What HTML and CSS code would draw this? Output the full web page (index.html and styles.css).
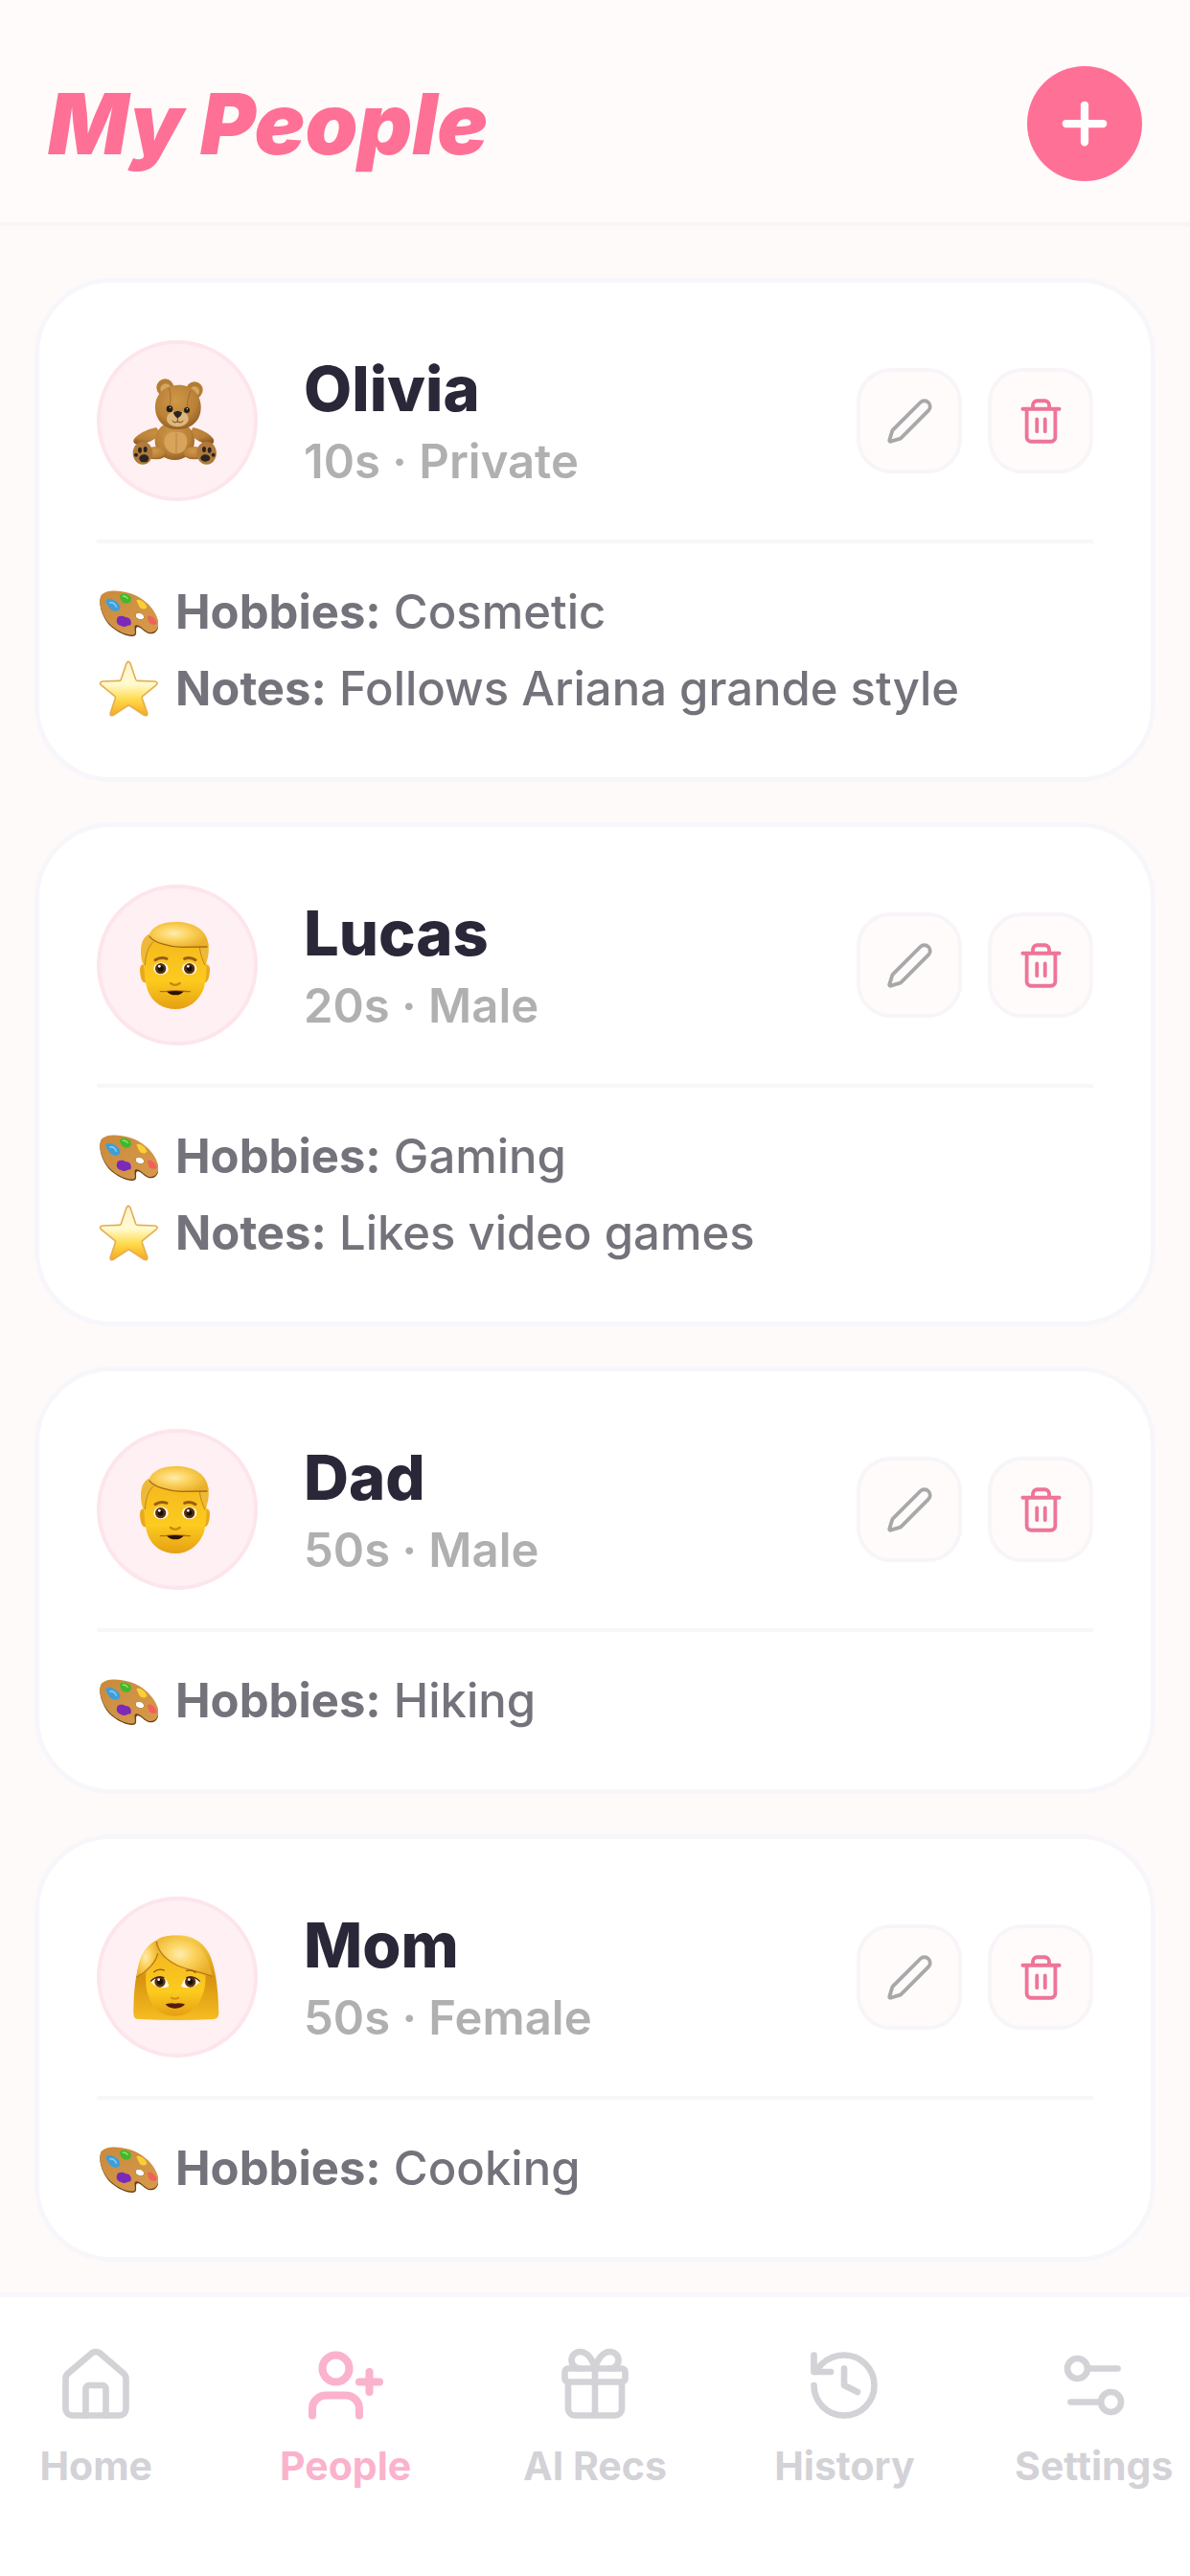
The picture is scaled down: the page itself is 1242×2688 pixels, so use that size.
FILE: index.html
```html
<!DOCTYPE html>
<html lang="en">
<head>
<meta charset="utf-8">
<meta name="viewport" content="width=device-width, initial-scale=1">
<title>My People</title>
<link rel="stylesheet" href="styles.css">
</head>
<body>
<svg class="sprite" aria-hidden="true">
  <defs>
    <radialGradient id="fur" cx=".45" cy=".35" r=".7"><stop offset="0" stop-color="#cf9847"/><stop offset=".65" stop-color="#b98037"/><stop offset="1" stop-color="#8d5a22"/></radialGradient>
    <linearGradient id="skin" x1="0" y1="0" x2="0" y2="1"><stop offset="0" stop-color="#f5b81e"/><stop offset=".6" stop-color="#fccb1f"/><stop offset="1" stop-color="#e5a012"/></linearGradient>
    <radialGradient id="hair" cx=".42" cy=".45" r=".6"><stop offset="0" stop-color="#ffecae"/><stop offset=".45" stop-color="#fbd25c"/><stop offset="1" stop-color="#eab02a"/></radialGradient>
    <linearGradient id="locks" x1="0" y1="0" x2="0" y2="1"><stop offset="0" stop-color="#fad04a"/><stop offset=".5" stop-color="#d6930f"/><stop offset="1" stop-color="#f6bd22"/></linearGradient>
    <linearGradient id="gold" x1="0" y1="0" x2="0" y2="1"><stop offset="0" stop-color="#fff3cf"/><stop offset=".42" stop-color="#fffbd0"/><stop offset=".7" stop-color="#ffdb4c"/><stop offset="1" stop-color="#f5a81f"/></linearGradient>
    <linearGradient id="wood" x1="0" y1="0" x2="1" y2="1"><stop offset="0" stop-color="#c98a3c"/><stop offset="1" stop-color="#d79a4c"/></linearGradient>
  </defs>
  <symbol id="bear" viewBox="77 55 480 480">
    <path d="M252 316C220 322 192 338 182 352C174 366 190 372 206 368C232 362 254 350 264 336ZM366 316C400 324 420 338 430 352C436 366 424 374 408 368C388 362 368 350 356 336Z" fill="url(#fur)"/>
    <ellipse cx="309" cy="358" rx="62" ry="60" fill="url(#fur)"/>
    <path d="M313 332C286 326 276 344 276 362C278 386 294 398 313 398C334 398 346 386 348 362C348 344 340 326 313 332Z" fill="#d8a45c"/>
    <path d="M314 334V396" stroke="#a87433" stroke-width="2"/>
    <ellipse cx="250" cy="396" rx="34" ry="20" fill="url(#fur)"/><ellipse cx="370" cy="396" rx="34" ry="20" fill="url(#fur)"/>
    <ellipse cx="209" cy="396" rx="31" ry="36" fill="#b07a3c"/><ellipse cx="409" cy="396" rx="31" ry="36" fill="#b07a3c"/>
    <g fill="#2a2521"><ellipse cx="213" cy="413" rx="15" ry="12"/><ellipse cx="200" cy="387" rx="6" ry="9"/><ellipse cx="217" cy="385" rx="6" ry="9"/><circle cx="188" cy="402" r="6"/><ellipse cx="405" cy="412" rx="15" ry="11"/><ellipse cx="401" cy="385" rx="6" ry="9"/><ellipse cx="418" cy="387" rx="6" ry="9"/><circle cx="430" cy="402" r="6"/></g>
    <circle cx="279" cy="191" r="27" fill="#b47c35"/><circle cx="371" cy="199" r="26" fill="#b47c35"/>
    <circle cx="281" cy="196" r="17" fill="#d5a662"/><circle cx="371" cy="203" r="15" fill="#d5a662"/>
    <path d="M320 183C362 182 391 211 391 254C391 294 362 322 320 322C276 322 248 294 248 252C248 211 278 184 320 183Z" fill="url(#fur)"/>
    <path d="M291 193Q300 218 292 252M360 200Q349 220 348 254" fill="none" stroke="#8b6029" stroke-width="2"/>
    <ellipse cx="318" cy="289" rx="34" ry="25" fill="#e0b77b"/>
    <path d="M305 269Q318 260 332 269Q330 282 318 287Q307 281 305 269Z" fill="#292522"/>
    <path d="M318 286V298M301 295Q308 305 318 298Q329 305 336 295" fill="none" stroke="#6f4720" stroke-width="3"/>
    <circle cx="293" cy="258" r="10" fill="#211d1b"/><circle cx="347" cy="262" r="9" fill="#211d1b"/>
    <circle cx="295" cy="254" r="2" fill="#fff"/><circle cx="348" cy="258" r="2" fill="#fff"/>
  </symbol>
  <symbol id="man" viewBox="77 79 480 480">
    <path d="M213 318C200 314 198 332 202 352C204 372 216 378 224 372ZM405 318C420 314 421 332 417 352C414 372 404 378 396 372Z" fill="#eaa91a"/>
    <path d="M220 236H406C411 318 410 372 396 402C380 434 350 457 312 457C272 457 240 436 226 402C212 364 210 318 220 236Z" fill="url(#skin)"/>
    <path d="M228 222C202 236 202 268 204 292C206 312 212 320 216 320C218 286 226 262 246 242ZM384 256C388 284 396 304 404 320C414 300 418 274 414 250Z" fill="#edb938"/>
    <path d="M216 320C218 286 226 262 242 246M387 262C389 284 396 304 404 320" stroke="#c5840f" stroke-width="3" fill="none"/>
    <path d="M228 226C238 196 274 184 312 184C366 184 412 206 415 260C370 264 326 266 288 258C258 252 236 240 228 226Z" fill="url(#hair)"/>
    <path d="M230 229C242 248 290 262 330 263L410 262" fill="none" stroke="#a66a10" stroke-width="4" stroke-linecap="round"/>
    <path d="M248 303Q264 292 284 299M340 299Q358 292 374 303" fill="none" stroke="#995d12" stroke-width="9" stroke-linecap="round"/>
    <ellipse cx="266" cy="330" rx="23" ry="19" fill="#fffbe8"/><ellipse cx="355" cy="330" rx="23" ry="19" fill="#fffbe8"/>
    <circle cx="265" cy="330" r="17" fill="#5a3010"/><circle cx="355" cy="330" r="17" fill="#5a3010"/>
    <circle cx="265" cy="330" r="9" fill="#17100b"/><circle cx="355" cy="330" r="9" fill="#17100b"/>
    <circle cx="261" cy="323" r="4" fill="#fff"/><circle cx="351" cy="323" r="4" fill="#fff"/>
    <path d="M296 376Q310 387 325 376" fill="none" stroke="#c98512" stroke-width="7" stroke-linecap="round"/>
    <path d="M264 402C286 403 300 398 310 400C322 398 338 403 357 402" fill="none" stroke="#ad6f10" stroke-width="4" stroke-linecap="round"/>
    <path d="M284 402Q310 398 337 402Q326 414 310 413Q295 413 284 402Z" fill="#2b1106"/>
  </symbol>
  <symbol id="woman" viewBox="77 66 480 480">
    <path d="M256 188C330 158 400 180 424 250C440 296 446 360 447 420Q446 436 432 438Q310 444 190 437Q180 434 180 420C182 340 184 230 256 188Z" fill="url(#locks)"/>
    <path d="M255 236C300 258 350 274 404 292C410 330 398 370 378 396C360 418 336 428 310 428C278 428 252 414 238 390C218 356 214 310 222 278Q240 262 255 236Z" fill="url(#skin)"/>
    <path d="M250 192C214 210 194 248 190 306C222 294 256 262 258 222Z" fill="url(#hair)"/>
    <path d="M254 190C276 172 330 170 368 196C404 222 418 254 426 304C376 294 320 280 284 250C262 232 250 212 254 190Z" fill="url(#hair)"/>
    <path d="M252 194C254 222 280 252 318 270C350 284 392 290 426 304M256 232C250 260 222 290 190 306" fill="none" stroke="#b87910" stroke-width="4"/>
    <path d="M244 290Q258 278 276 285M346 286Q362 281 374 292" fill="none" stroke="#8b5410" stroke-width="4" stroke-linecap="round"/>
    <path d="M234 322Q250 300 276 308Q290 320 290 336Q258 348 234 322ZM388 322Q370 300 345 308Q332 320 330 336Q362 348 388 322Z" fill="#fffbe4"/>
    <circle cx="263" cy="321" r="17" fill="#5b3210"/><circle cx="358" cy="321" r="17" fill="#5b3210"/>
    <circle cx="263" cy="321" r="9" fill="#17100b"/><circle cx="358" cy="321" r="9" fill="#17100b"/>
    <circle cx="259" cy="314" r="4" fill="#fff"/><circle cx="354" cy="314" r="4" fill="#fff"/>
    <path d="M234 320Q250 300 276 308M388 320Q370 300 345 308" fill="none" stroke="#3f220a" stroke-width="4"/>
    <path d="M299 371Q310 378 321 371" fill="none" stroke="#cf8d14" stroke-width="6" stroke-linecap="round"/>
    <path d="M280 391Q300 386 310 389Q322 386 341 391Q330 405 310 404Q291 405 280 391Z" fill="#571c0c"/>
  </symbol>
  <symbol id="palette" viewBox="36 18 192 192">
    <path d="M50 62C66 44 104 46 140 56C186 70 226 112 229 152C230 172 216 184 198 180C184 176 174 160 164 160C154 162 164 178 156 187C142 194 108 182 82 160C54 134 38 88 50 62ZM170 116C158 114 154 126 162 132C170 138 182 138 184 130C184 122 178 117 170 116Z" fill="#6a3f16" fill-rule="evenodd"/>
    <path d="M50 60C66 42 104 44 140 54C186 68 226 110 229 148C230 168 216 180 198 176C184 172 174 154 160 154C148 156 160 174 154 182C142 190 108 178 82 156C54 130 38 86 50 60ZM170 116C158 114 154 126 162 132C170 138 182 138 184 130C184 122 178 117 170 116Z" fill="url(#wood)" fill-rule="evenodd"/>
    <path d="M66 74C74 68 88 72 98 82C110 90 112 102 104 108C92 114 76 106 72 94C68 86 62 82 66 74Z" fill="#3d9edb"/><path d="M76 84Q90 80 98 98" stroke="#8bd0f5" stroke-width="4" fill="none"/>
    <path d="M108 62C114 52 130 54 140 64C148 74 142 86 130 86C118 86 108 76 108 62Z" fill="#41b82b"/><path d="M116 64Q126 60 134 72" stroke="#91e56e" stroke-width="4" fill="none"/>
    <path d="M160 76C172 70 190 84 193 98C186 108 172 104 168 94Z" fill="#fbcf35"/>
    <path d="M100 132C104 122 120 124 128 130C142 130 146 144 142 154C132 154 124 164 112 156C98 152 96 142 100 132Z" fill="#7a29b8"/>
    <path d="M194 128C202 118 220 132 224 148C220 156 206 152 200 146Z" fill="#f2605c"/>
  </symbol>
  <symbol id="star" viewBox="36 258 192 192">
    <path d="M129 274Q135 262 141 274L158 324Q160 328 164 328L218 330Q230 333 222 342L180 376Q177 379 178 383L194 428Q196 440 184 436L140 407Q136 404 132 407L88 436Q76 440 79 428L94 383Q95 379 92 376L50 342Q42 333 54 330L106 328Q111 328 112 324Z" fill="url(#gold)" stroke="#e6ae50" stroke-width="5"/>
  </symbol>
  <symbol id="pencil" viewBox="0 0 24 24"><path d="M21.174 6.812a1 1 0 0 0-3.986-3.987L3.842 16.174a2 2 0 0 0-.5.83l-1.321 4.352a.5.5 0 0 0 .623.622l4.353-1.32a2 2 0 0 0 .83-.497z"/></symbol>
  <symbol id="trash" viewBox="0 0 24 24"><path d="M3 6h18M19 6v14c0 1-1 2-2 2H7c-1 0-2-1-2-2V6M8 6V4c0-1 1-2 2-2h4c1 0 2 1 2 2v2M10 11v6M14 11v6"/></symbol>
</svg>

<header class="header">
  <h1 class="title">My People</h1>
  <button class="add" type="button" aria-label="Add person"><svg class="add-icon" viewBox="0 0 24 24"><path d="M5 12h14M12 5v14"/></svg></button>
</header>

<main class="people">
  <article class="card">
    <div class="person">
      <div class="avatar"><svg class="face" role="img" aria-label="Teddy bear"><use href="#bear"/></svg></div>
      <div class="who"><h2 class="name">Olivia</h2><p class="meta">10s · Private</p></div>
      <div class="actions">
        <button class="action" type="button" aria-label="Edit Olivia"><svg class="icon"><use href="#pencil"/></svg></button>
        <button class="action danger" type="button" aria-label="Delete Olivia"><svg class="icon"><use href="#trash"/></svg></button>
      </div>
    </div>
    <div class="details">
      <p class="detail"><svg class="emoji" aria-hidden="true"><use href="#palette"/></svg><span><strong>Hobbies:</strong> Cosmetic</span></p>
      <p class="detail"><svg class="emoji" aria-hidden="true"><use href="#star"/></svg><span><strong>Notes:</strong> Follows Ariana grande style</span></p>
    </div>
  </article>

  <article class="card">
    <div class="person">
      <div class="avatar"><svg class="face" role="img" aria-label="Man"><use href="#man"/></svg></div>
      <div class="who"><h2 class="name">Lucas</h2><p class="meta">20s · Male</p></div>
      <div class="actions">
        <button class="action" type="button" aria-label="Edit Lucas"><svg class="icon"><use href="#pencil"/></svg></button>
        <button class="action danger" type="button" aria-label="Delete Lucas"><svg class="icon"><use href="#trash"/></svg></button>
      </div>
    </div>
    <div class="details">
      <p class="detail"><svg class="emoji" aria-hidden="true"><use href="#palette"/></svg><span><strong>Hobbies:</strong> Gaming</span></p>
      <p class="detail"><svg class="emoji" aria-hidden="true"><use href="#star"/></svg><span><strong>Notes:</strong> Likes video games</span></p>
    </div>
  </article>

  <article class="card">
    <div class="person">
      <div class="avatar"><svg class="face" role="img" aria-label="Man"><use href="#man"/></svg></div>
      <div class="who"><h2 class="name">Dad</h2><p class="meta">50s · Male</p></div>
      <div class="actions">
        <button class="action" type="button" aria-label="Edit Dad"><svg class="icon"><use href="#pencil"/></svg></button>
        <button class="action danger" type="button" aria-label="Delete Dad"><svg class="icon"><use href="#trash"/></svg></button>
      </div>
    </div>
    <div class="details">
      <p class="detail"><svg class="emoji" aria-hidden="true"><use href="#palette"/></svg><span><strong>Hobbies:</strong> Hiking</span></p>
    </div>
  </article>

  <article class="card">
    <div class="person">
      <div class="avatar"><svg class="face" role="img" aria-label="Woman"><use href="#woman"/></svg></div>
      <div class="who"><h2 class="name">Mom</h2><p class="meta">50s · Female</p></div>
      <div class="actions">
        <button class="action" type="button" aria-label="Edit Mom"><svg class="icon"><use href="#pencil"/></svg></button>
        <button class="action danger" type="button" aria-label="Delete Mom"><svg class="icon"><use href="#trash"/></svg></button>
      </div>
    </div>
    <div class="details">
      <p class="detail"><svg class="emoji" aria-hidden="true"><use href="#palette"/></svg><span><strong>Hobbies:</strong> Cooking</span></p>
    </div>
  </article>
</main>

<nav class="tabs" aria-label="Main">
  <div class="tab-row">
    <a class="tab" href="#home"><svg class="tab-icon" viewBox="0 0 24 24"><path d="M15 21v-8a1 1 0 0 0-1-1h-4a1 1 0 0 0-1 1v8"/><path d="M3 10a2 2 0 0 1 .709-1.528l7-6a2 2 0 0 1 2.582 0l7 6A2 2 0 0 1 21 10v9a2 2 0 0 1-2 2H5a2 2 0 0 1-2-2z"/></svg><span>Home</span></a>
    <a class="tab active" href="#people" aria-current="page"><svg class="tab-icon" viewBox="0 0 24 24"><path d="M16 21v-2a4 4 0 0 0-4-4H6a4 4 0 0 0-4 4v2M19 8v6M22 11h-6"/><circle cx="9" cy="7" r="4"/></svg><span>People</span></a>
    <a class="tab" href="#recs"><svg class="tab-icon" viewBox="0 0 24 24"><rect x="3" y="7" width="18" height="4" rx="1"/><path d="M12 7v14M20 11v8a2 2 0 0 1-2 2H6a2 2 0 0 1-2-2v-8M7.500 7a1 1 0 0 1 0-5A4.800 8 0 0 1 12 7a4.800 8 0 0 1 4.500-5 1 1 0 0 1 0 5"/></svg><span>AI Recs</span></a>
    <a class="tab" href="#history"><svg class="tab-icon" viewBox="0 0 24 24"><path d="M3 12a9 9 0 1 0 9-9 9.750 9.750 0 0 0-6.740 2.740L3 8M3 3v5h5M12 7v5l4 2"/></svg><span>History</span></a>
    <a class="tab" href="#settings"><svg class="tab-icon" viewBox="0 0 24 24"><path d="M19 7h-9M14 17H5"/><circle cx="17" cy="17" r="3"/><circle cx="7" cy="7" r="3"/></svg><span>Settings</span></a>
  </div>
</nav>
</body>
</html>
```
FILE: styles.css
```css
* { box-sizing: border-box; }

body {
  margin: 0;
  min-height: 100vh;
  display: flex;
  flex-direction: column;
  background: #fffafa;
  color: #74727a;
  font-family: Inter, "Liberation Sans", sans-serif;
}

h1, h2, p { margin: 0; }
button { padding: 0; font: inherit; cursor: pointer; }
svg { display: block; flex: none; }
.sprite { position: absolute; width: 0; height: 0; }

.header {
  display: flex;
  align-items: center;
  justify-content: space-between;
  padding: 69px 50px 43px;
  background: #fffbfa;
  border-bottom: 4px solid #fbf4f5;
}
.title {
  color: #ff7096;
  font-size: 88px;
  font-style: italic;
  font-weight: 900;
  line-height: 120px;
}
.add {
  display: grid;
  place-items: center;
  width: 120px;
  height: 120px;
  border: 0;
  border-radius: 50%;
  background: #ff7096;
}
.add-icon {
  width: 66px;
  height: 66px;
  fill: none;
  stroke: #fff;
  stroke-width: 3;
  stroke-linecap: round;
}

.people {
  flex: 1;
  display: flex;
  flex-direction: column;
  gap: 42px;
  padding: 54px 36px 32px;
}
.card {
  padding: 60px;
  background: #fff;
  border: 5px solid #f7f6fb;
  border-radius: 80px;
}
.person {
  display: flex;
  align-items: center;
  gap: 48px;
  padding-bottom: 40px;
  border-bottom: 4px solid #f8f7f8;
}
.avatar {
  flex: none;
  width: 168px;
  height: 168px;
  border: 4px solid #fde5eb;
  border-radius: 50%;
  background: #fff0f3;
}
.face { width: 160px; height: 160px; }
.who {
  flex: 1;
  display: flex;
  flex-direction: column;
  gap: 6px;
}
.name {
  color: #2a2838;
  font-size: 65px;
  font-weight: 800;
  line-height: 80px;
}
.meta {
  color: #b0b0b1;
  font-size: 49px;
  font-weight: 600;
  line-height: 60px;
}
.actions { display: flex; gap: 27px; }
.action {
  display: grid;
  place-items: center;
  width: 110px;
  height: 110px;
  border: 4px solid #f8f5f8;
  border-radius: 36px;
  background: #fffbfb;
  color: #a9a8a9;
}
.danger { color: #ee7498; }
.icon {
  width: 51px;
  height: 51px;
  fill: none;
  stroke: currentColor;
  stroke-width: 1.8;
  stroke-linecap: round;
  stroke-linejoin: round;
}

.details {
  display: flex;
  flex-direction: column;
  gap: 16px;
  padding-top: 40px;
}
.detail {
  display: flex;
  align-items: center;
  gap: 18px;
  font-size: 49px;
  font-weight: 500;
  line-height: 64px;
}
.detail strong { font-weight: 700; }
.emoji { width: 64px; height: 64px; }

.tabs {
  position: sticky;
  bottom: 0;
  overflow: hidden;
  padding: 50px 0 91px;
  background: #fff;
  border-top: 5px solid #f8f7fb;
}
/* The outer tabs bleed past the screen edges. */
.tab-row {
  display: grid;
  grid-template-columns: repeat(5, 1fr);
  margin: 0 -30px;
}
.tab {
  display: flex;
  flex-direction: column;
  align-items: center;
  gap: 18px;
  color: #d3d2d7;
  font-size: 41px;
  font-weight: 700;
  line-height: 48px;
  text-decoration: none;
}
.tab-icon {
  width: 84px;
  height: 84px;
  fill: none;
  stroke: currentColor;
  stroke-width: 1.9;
  stroke-linecap: round;
  stroke-linejoin: round;
}
.active { color: #fbb2cd; }
.active .tab-icon { stroke-width: 2.3; }
```
